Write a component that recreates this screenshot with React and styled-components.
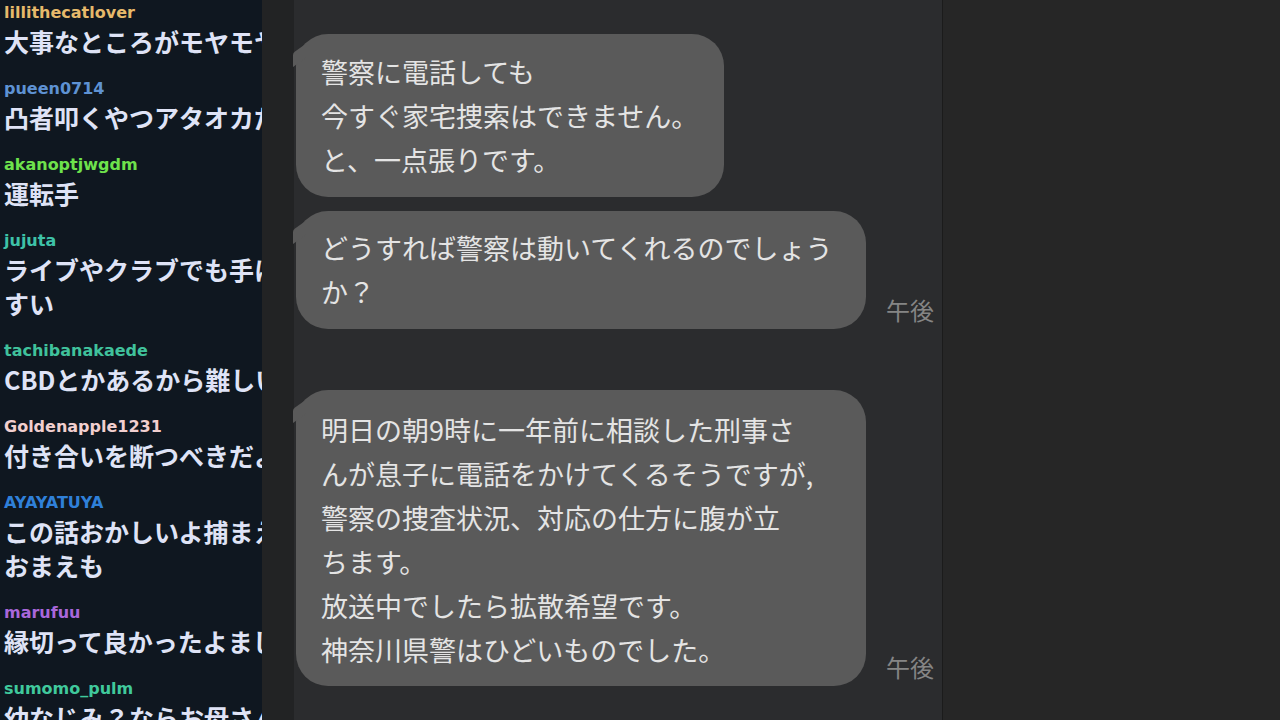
import React from "react";
import styled, { createGlobalStyle } from "styled-components";

const GlobalStyle = createGlobalStyle`
  html, body {
    margin: 0;
    padding: 0;
    background: #262626;
  }
  * {
    box-sizing: border-box;
  }
`;

const Screen = styled.div`
  display: flex;
  width: 1280px;
  height: 720px;
  overflow: hidden;
`;

// live chat column on the left
const ChatSidebar = styled.aside`
  width: 262px;
  flex-shrink: 0;
  background: #0f1720;
  overflow: hidden;
`;

const ChatList = styled.div`
  width: 380px;
  padding: 2px 0 0 4px;
  display: flex;
  flex-direction: column;
  gap: 20px;
`;

const ChatEntry = styled.div`
  display: flex;
  flex-direction: column;
`;

const UserName = styled.div`
  font-family: "DejaVu Sans", "Noto Sans", sans-serif;
  font-weight: 700;
  font-size: 16px;
  line-height: 22px;
  color: ${(p) => p.color};
`;

const ChatLine = styled.div`
  font-family: "Noto Sans CJK JP", "Noto Sans", sans-serif;
  font-weight: 700;
  font-size: 25px;
  line-height: 34px;
  color: #dfe3f6;
  white-space: nowrap;
`;

const Gutter = styled.div`
  width: 32px;
  flex-shrink: 0;
  background: #222324;
`;

const Conversation = styled.main`
  width: 648px;
  flex-shrink: 0;
  background: #2b2c2e;
  padding: 34px 0 0 2px;
  display: flex;
  flex-direction: column;
`;

const MessageRow = styled.div`
  display: flex;
  align-items: flex-end;
  gap: 20px;
  margin-top: ${(p) => p.$gap || 0}px;
`;

const Bubble = styled.div`
  position: relative;
  background: #5a5a5a;
  border-radius: 32px;
  padding: ${(p) => p.$pad || "16px 25px 15px 25px"};
  width: ${(p) => (p.$width ? `${p.$width}px` : "auto")};
  font-family: "Noto Sans CJK JP", "Noto Sans", sans-serif;
  font-weight: 400;
  font-size: 27px;
  line-height: 44px;
  color: #e4e4e4;
  white-space: nowrap;

  &::before {
    content: "";
    position: absolute;
    left: -3px;
    top: 14px;
    width: 14px;
    height: 14px;
    background: #5a5a5a;
    border-radius: 2px 0 0 0;
    transform: skewY(-35deg);
  }
`;

const Stamp = styled.span`
  font-family: "Noto Sans CJK JP", "Noto Sans", sans-serif;
  font-size: 24px;
  line-height: 30px;
  color: #858585;
  padding-bottom: 4px;
`;

const SidePanel = styled.aside`
  flex: 1;
  background: #262626;
  border-left: 1px solid #1b1b1b;
`;

const chat = [
  { name: "lillithecatlover", color: "#e6b96b", lines: ["大事なところがモヤモヤしてる"] },
  { name: "pueen0714", color: "#5e92d3", lines: ["凸者叩くやつアタオカだろ"] },
  { name: "akanoptjwgdm", color: "#6ee24c", lines: ["運転手"] },
  { name: "jujuta", color: "#3ec2a8", lines: ["ライブやクラブでも手に入りや", "すい"] },
  { name: "tachibanakaede", color: "#40c29c", lines: ["CBDとかあるから難しいよね"] },
  { name: "Goldenapple1231", color: "#f2cfcf", lines: ["付き合いを断つべきだよな"] },
  { name: "AYAYATUYA", color: "#2f80d9", lines: ["この話おかしいよ捕まえろよ", "おまえも"] },
  { name: "marufuu", color: "#a967da", lines: ["縁切って良かったよまじで"] },
  { name: "sumomo_pulm", color: "#40c99c", lines: ["幼なじみ？ならお母さんも"] },
];

const Lines = ({ lines }) =>
  lines.map((l, i) => (
    <React.Fragment key={i}>
      {i > 0 && <br />}
      {l}
    </React.Fragment>
  ));

const App = () => {
  return (
    <>
      <GlobalStyle />
      <Screen>
        <ChatSidebar>
          <ChatList>
            {chat.map((c) => (
              <ChatEntry key={c.name}>
                <UserName color={c.color}>{c.name}</UserName>
                {c.lines.map((l, i) => (
                  <ChatLine key={i}>{l}</ChatLine>
                ))}
              </ChatEntry>
            ))}
          </ChatList>
        </ChatSidebar>
        <Gutter />
        <Conversation>
          <MessageRow>
            <Bubble $width={428}>
              <Lines lines={["警察に電話しても", "今すぐ家宅捜索はできません。", "と、一点張りです。"]} />
            </Bubble>
          </MessageRow>
          <MessageRow $gap={14}>
            <Bubble $width={570} $pad="15px 25px 15px 25px">
              <Lines lines={["どうすれば警察は動いてくれるのでしょう", "か？"]} />
            </Bubble>
            <Stamp>午後</Stamp>
          </MessageRow>
          <MessageRow $gap={61}>
            <Bubble $width={570} $pad="18px 25px 14px 25px">
              <Lines
                lines={[
                  "明日の朝9時に一年前に相談した刑事さ",
                  "んが息子に電話をかけてくるそうですが,",
                  "警察の捜査状況、対応の仕方に腹が立",
                  "ちます。",
                  "放送中でしたら拡散希望です。",
                  "神奈川県警はひどいものでした。",
                ]}
              />
            </Bubble>
            <Stamp>午後</Stamp>
          </MessageRow>
        </Conversation>
        <SidePanel />
      </Screen>
    </>
  );
};

export default App;
